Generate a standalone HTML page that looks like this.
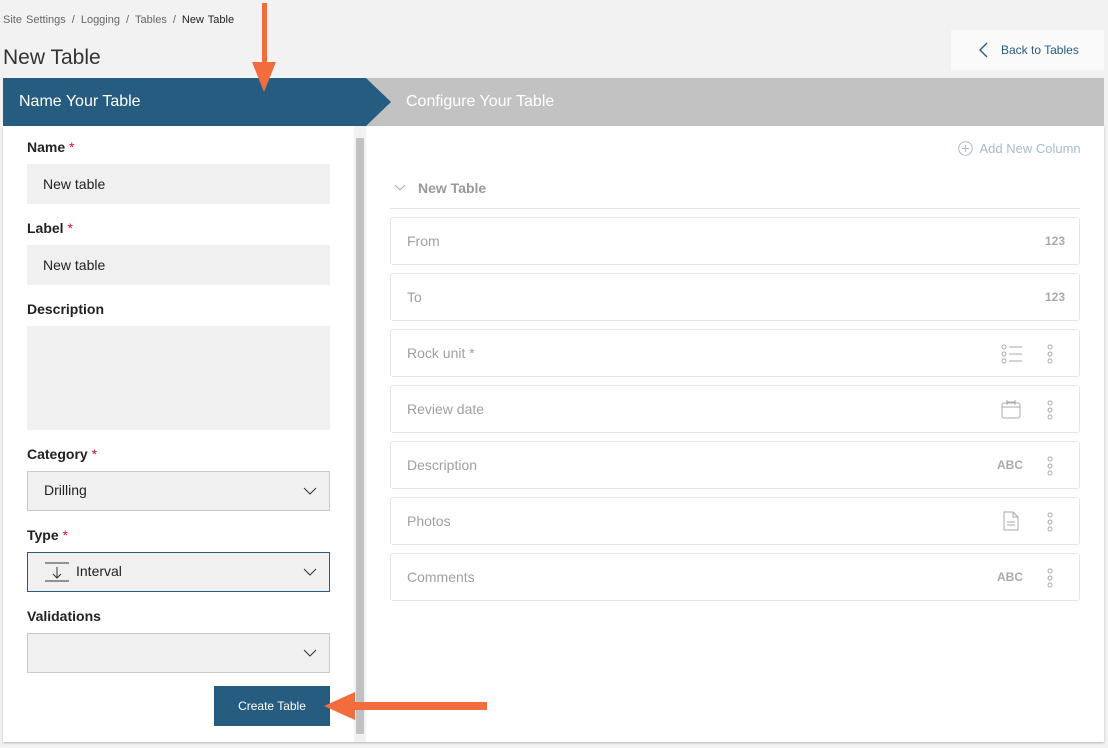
<!DOCTYPE html>
<html><head><meta charset="utf-8"><style>
*{margin:0;padding:0;box-sizing:border-box}
body{width:1108px;height:748px;background:#f2f2f2;font-family:"Liberation Sans",sans-serif;position:relative;overflow:hidden;color:#222}
.a{position:absolute}
.crumb{left:3px;top:14px;font-size:11px;color:#666;word-spacing:1px}
.crumb b{font-weight:normal;color:#222}
.crumb s{text-decoration:none;margin:0 6px}
.title{left:3px;top:46px;font-size:21px;color:#333}
.back{left:951px;top:30px;width:153px;height:40px;background:#fafafa;color:#2a5b80;font-size:12px}
.panel{left:3px;top:126px;width:1101px;height:616px;background:#fff;box-shadow:0 1px 2px rgba(0,0,0,.25)}
.lbl{font-size:14px;font-weight:bold;color:#222;left:27px}
.lbl i{font-style:normal;color:#d0103a;font-weight:normal}
.inp{left:27px;width:303px;height:40px;background:#f0f0f0;font-size:14px;padding:12px 16px;color:#222}
.sel{border:1px solid #c8c8c8;padding-top:10px}
.row{left:390px;width:690px;height:48px;border:1px solid #e6e6e6;border-radius:3px;font-size:14px;color:#a0a0a0;padding:15px 16px}
.t{position:absolute;right:14px;top:16px;font-size:12px;font-weight:bold;color:#aaa}
.t2{right:56px}
.dots{position:absolute;right:26px;top:14px}
</style></head><body>
<div class="a crumb">Site Settings<s>/</s>Logging<s>/</s>Tables<s>/</s><b>New Table</b></div>
<div class="a title">New Table</div>
<div class="a back"><svg class="a" style="left:28px;top:12px" width="10" height="16"><path d="M8 1L1 8l7 7" stroke="#2a5b80" stroke-width="1.4" fill="none"/></svg><span class="a" style="left:50px;top:13px">Back to Tables</span></div>
<div class="a" style="left:3px;top:78px;width:1101px;height:48px;background:#c2c2c2"></div>
<svg class="a" style="left:3px;top:78px" width="390" height="48"><path d="M0 0H363L388 24L363 48H0Z" fill="#265c80"/></svg>
<div class="a" style="left:19px;top:93px;font-size:16px;color:#fff">Name Your Table</div>
<div class="a" style="left:406px;top:93px;font-size:16px;color:#fff">Configure Your Table</div>
<div class="a panel"></div>
<div class="a" style="left:354px;top:126px;width:12px;height:616px;background:#f1f1f1"></div>
<div class="a" style="left:356px;top:138px;width:8px;height:596px;background:#c1c1c1"></div>
<div class="a lbl" style="top:139px">Name <i>*</i></div>
<div class="a inp" style="top:164px">New table</div>
<div class="a lbl" style="top:220px">Label <i>*</i></div>
<div class="a inp" style="top:245px">New table</div>
<div class="a lbl" style="top:301px">Description</div>
<div class="a inp" style="top:326px;height:104px"></div>
<div class="a lbl" style="top:446px">Category <i>*</i></div>
<div class="a inp sel" style="top:471px">Drilling<svg class="a" style="right:12px;top:15px" width="14" height="8"><path d="M1 1l6 6 6-6" stroke="#333" fill="none"/></svg></div>
<div class="a lbl" style="top:527px">Type <i>*</i></div>
<div class="a inp sel" style="top:552px;border-color:#265c80;padding-left:48px">Interval
<svg class="a" style="left:16px;top:9px" width="26" height="20"><path d="M1 1h24M1 19h24M13 5v11M9 12l4 4 4-4" stroke="#333" fill="none"/></svg>
<svg class="a" style="right:12px;top:15px" width="14" height="8"><path d="M1 1l6 6 6-6" stroke="#333" fill="none"/></svg></div>
<div class="a lbl" style="top:608px">Validations</div>
<div class="a inp sel" style="top:633px"><svg class="a" style="right:12px;top:15px" width="14" height="8"><path d="M1 1l6 6 6-6" stroke="#333" fill="none"/></svg></div>
<div class="a" style="left:214px;top:686px;width:116px;height:40px;background:#265c80;color:#fff;font-size:12px;text-align:center;line-height:40px">Create Table</div>
<div class="a" style="left:958px;top:141px;font-size:13px;color:#a8bccc"><svg style="vertical-align:-3px" width="15" height="15"><circle cx="7.5" cy="7.5" r="6.8" stroke="#a8bccc" fill="none"/><path d="M7.5 4v7M4 7.5h7" stroke="#a8bccc"/></svg>&nbsp; Add New Column</div>
<svg class="a" style="left:394px;top:184px" width="12" height="8"><path d="M1 1l5 5 5-5" stroke="#aaa" fill="none"/></svg>
<div class="a" style="left:418px;top:180px;font-size:14px;font-weight:bold;color:#999">New Table</div>
<div class="a" style="left:390px;top:208px;width:690px;height:1px;background:#e6e6e6"></div>
<div class="a row" style="top:217px">From<span class="t">123</span></div>
<div class="a row" style="top:273px">To<span class="t">123</span></div>
<div class="a row" style="top:329px">Rock unit *<svg class="a" style="right:56px;top:14px" width="22" height="20"><g stroke="#aaa" fill="none"><circle cx="3" cy="3" r="2"/><circle cx="3" cy="10" r="2"/><circle cx="3" cy="17" r="2"/><path d="M8 3h13M8 10h13M8 17h13"/></g></svg><svg class="dots" width="6" height="20"><g stroke="#aaa" fill="none"><circle cx="3" cy="3" r="2"/><circle cx="3" cy="10" r="2"/><circle cx="3" cy="17" r="2"/></g></svg></div>
<div class="a row" style="top:385px">Review date<svg class="a" style="right:58px;top:13px" width="20" height="20"><g stroke="#aaa" fill="none"><rect x="1" y="4" width="18" height="15" rx="2"/><path d="M1 8h18M6 1v5M14 1v5M6 3h8"/></g></svg><svg class="dots" width="6" height="20"><g stroke="#aaa" fill="none"><circle cx="3" cy="3" r="2"/><circle cx="3" cy="10" r="2"/><circle cx="3" cy="17" r="2"/></g></svg></div>
<div class="a row" style="top:441px">Description<span class="t t2">ABC</span><svg class="dots" width="6" height="20"><g stroke="#aaa" fill="none"><circle cx="3" cy="3" r="2"/><circle cx="3" cy="10" r="2"/><circle cx="3" cy="17" r="2"/></g></svg></div>
<div class="a row" style="top:497px">Photos<svg class="a" style="right:60px;top:13px" width="16" height="20"><g stroke="#aaa" fill="none"><path d="M1 1h9l5 5v13H1z"/><path d="M10 1v5h5M4 11h8M4 14h8"/></g></svg><svg class="dots" width="6" height="20"><g stroke="#aaa" fill="none"><circle cx="3" cy="3" r="2"/><circle cx="3" cy="10" r="2"/><circle cx="3" cy="17" r="2"/></g></svg></div>
<div class="a row" style="top:553px">Comments<span class="t t2">ABC</span><svg class="dots" width="6" height="20"><g stroke="#aaa" fill="none"><circle cx="3" cy="3" r="2"/><circle cx="3" cy="10" r="2"/><circle cx="3" cy="17" r="2"/></g></svg></div>
<svg class="a" style="left:248px;top:0" width="32" height="95"><path d="M14 3h5v59h9L16 92L4 62h10z" fill="#f26d3d"/></svg>
<svg class="a" style="left:320px;top:690px" width="170" height="32"><path d="M4 16L35 2v10h132v8H35v10z" fill="#f26d3d"/></svg>
</body></html>
